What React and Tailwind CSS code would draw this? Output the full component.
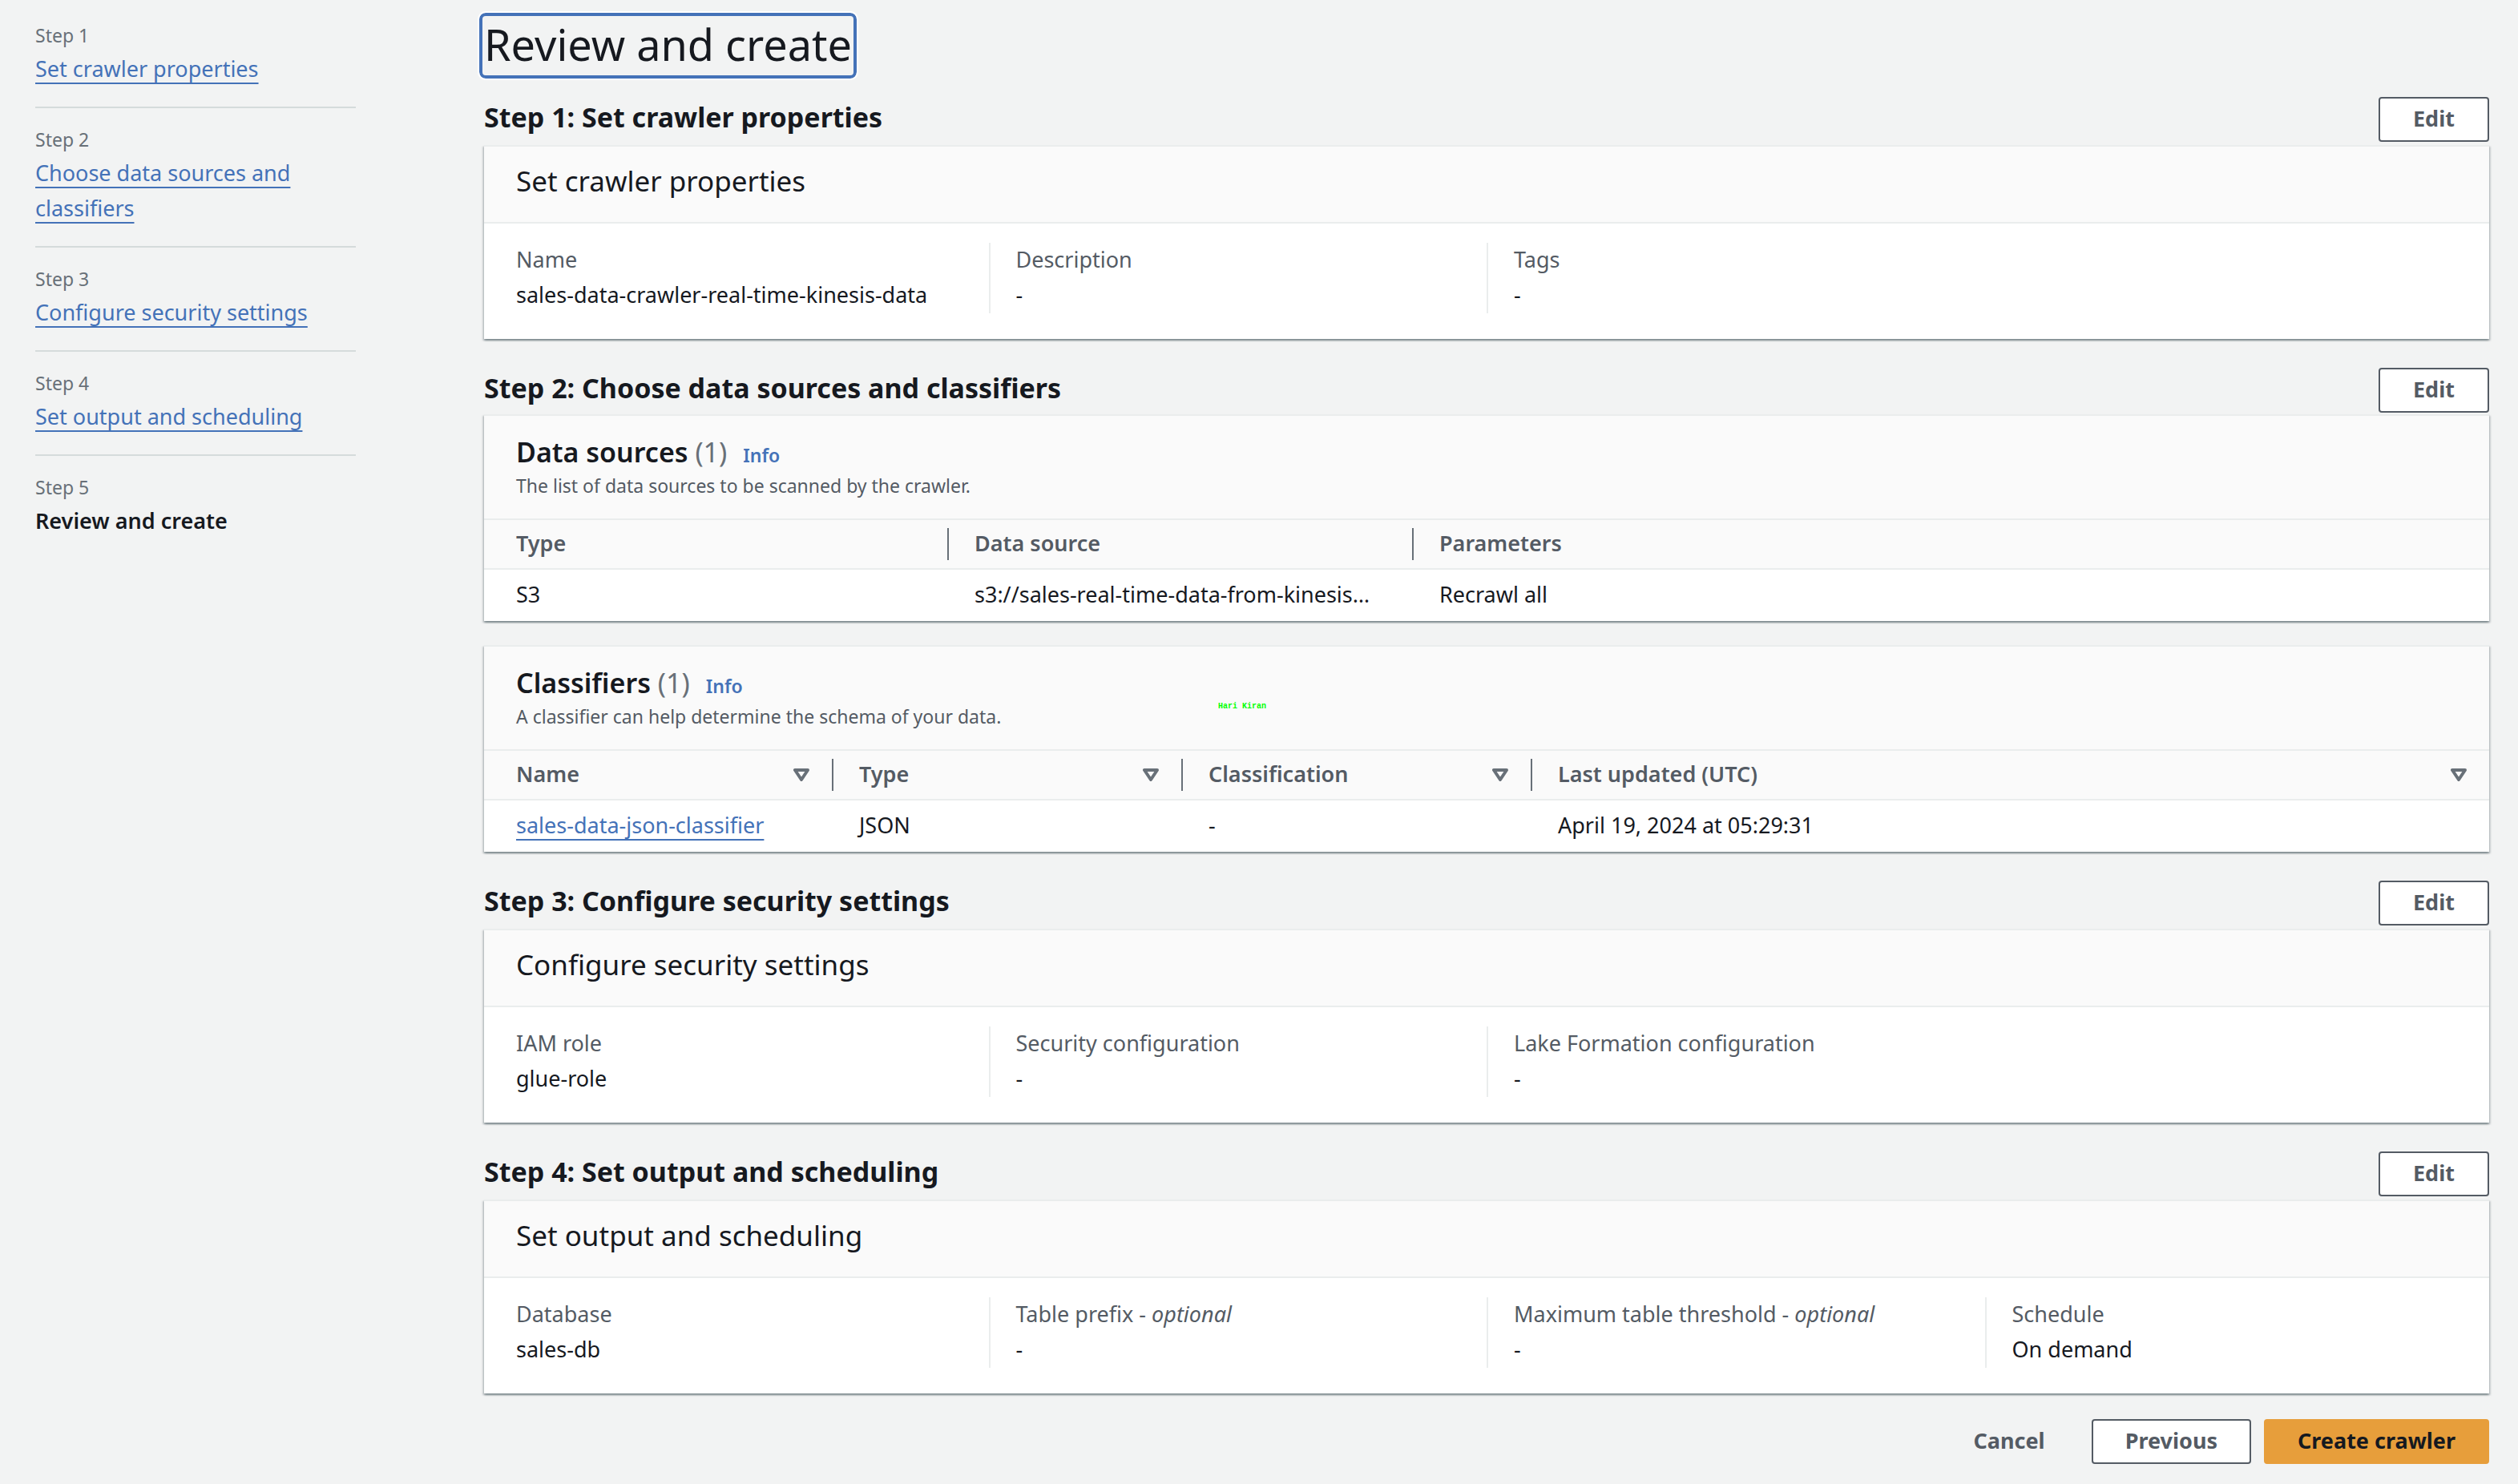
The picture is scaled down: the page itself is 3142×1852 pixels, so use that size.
const steps = [
  "Set crawler properties",
  "Choose data sources and classifiers",
  "Configure security settings",
  "Set output and scheduling",
];

const linkStyle =
  "text-[#4472b8] underline decoration-2 underline-offset-[7px] [text-decoration-skip-ink:none]";

function StepNav() {
  return (
    <nav aria-label="Steps" className="w-[400px] shrink-0 pt-6">
      <ol>
        {steps.map((label, i) => (
          <li key={label} className="mb-[19px] border-b-2 border-[#d5dbdb] pb-[25px]">
            <span className="block text-[23px] leading-[40px] text-[#687078]">Step {i + 1}</span>
            <a href={`#step-${i + 1}`} className={`block leading-[44px] ${linkStyle}`}>
              {label}
            </a>
          </li>
        ))}
        <li aria-current="step">
          <span className="block text-[23px] leading-[40px] text-[#687078]">Step 5</span>
          <span className="block font-semibold leading-[44px]">Review and create</span>
        </li>
      </ol>
    </nav>
  );
}

function Button({ variant = "normal", children, ...rest }) {
  const look = {
    normal: "border-[#545b64] bg-white text-[#545b64]",
    link: "border-transparent text-[#545b64]",
    primary: "border-[#e79e3b] bg-[#e79e3b] text-[#16191f]",
  }[variant];
  return (
    <button
      type="button"
      className={`h-14 min-w-[138px] whitespace-nowrap rounded border-2 px-10 pb-0.5 font-bold leading-[50px] ${look}`}
      {...rest}
    >
      {children}
    </button>
  );
}

function StepSection({ number, title, headerGap = "mb-1", children }) {
  return (
    <section id={`step-${number}`}>
      <div className={`flex items-start justify-between gap-4 ${headerGap}`}>
        <h2 className="text-[34px] font-bold leading-[50px]">
          Step {number}: {title}
        </h2>
        <Button aria-label={`Edit step ${number}`}>Edit</Button>
      </div>
      {children}
    </section>
  );
}

function Card({ children }) {
  return (
    <div className="relative border-t-2 border-[#eaeded] bg-white shadow-[0_2px_2px_0_rgba(0,28,36,0.3),2px_2px_2px_0_rgba(0,28,36,0.15),-2px_2px_2px_0_rgba(0,28,36,0.15)]">
      {children}
    </div>
  );
}

function DetailCard({ title, items }) {
  return (
    <Card>
      <h3 className="border-b-2 border-[#eaeded] bg-[#fafafa] px-10 pb-[29px] pt-[21px] text-[35px] leading-[44px]">
        {title}
      </h3>
      <dl className="mx-2 grid grid-cols-4 pb-8 pt-6">
        {items.map(({ label, value, optional }) => (
          <div
            key={label}
            className="border-l-2 border-[#eaeded] pl-8 first:border-l-0"
          >
            <dt className="leading-[42px] text-[#545b64]">
              {label}
              {optional && (
                <>
                  {" - "}
                  <i>optional</i>
                </>
              )}
            </dt>
            <dd className="leading-[46px]">{value}</dd>
          </div>
        ))}
      </dl>
    </Card>
  );
}

function SortIcon() {
  return (
    <svg width="20" height="16" viewBox="0 0 20 16" fill="none" aria-hidden="true">
      <path d="M2 2h16l-8 12z" stroke="#687078" strokeWidth="4" strokeLinejoin="round" />
    </svg>
  );
}

function TableCard({ title, description, columns, row, colWidth, sortable, children }) {
  return (
    <Card>
      <div className="border-b-2 border-[#eaeded] bg-[#fafafa] px-10 pb-[21px] pt-[23px]">
        <div className="flex h-11 items-baseline leading-[44px]">
          <h3 className="text-[34px] font-semibold">
            {title} <span className="font-normal text-[#687078]">(1)</span>
          </h3>
          <a href="#info" className="ml-5 text-[23px] font-semibold text-[#4472b8]">
            Info
          </a>
        </div>
        <p className="text-[23px] leading-[40px] text-[#545b64]">{description}</p>
      </div>
      <table className="w-full table-fixed text-left" aria-label={title}>
        <colgroup>
          {columns.map((name, i) => (
            <col key={name} className={i < columns.length - 1 ? colWidth : ""} />
          ))}
        </colgroup>
        <thead>
          <tr className="border-b-2 border-[#eaeded] bg-[#fafafa] text-[#545b64]">
            {columns.map((name, i) => (
              <th key={name} scope="col" className="py-[10px] font-semibold">
                <div
                  className={`flex h-10 items-center justify-between pr-7 leading-[38px] ${
                    i === 0 ? "pl-10" : "pl-8"
                  } ${i < columns.length - 1 ? "border-r-2 border-[#687078]" : ""}`}
                >
                  <span className="h-10">{name}</span>
                  {sortable && (
                    <button type="button" aria-label={`Sort by ${name}`}>
                      <SortIcon />
                    </button>
                  )}
                </div>
              </th>
            ))}
          </tr>
        </thead>
        <tbody>
          <tr>
            {row.map((cell, i) => (
              <td
                key={i}
                className={`whitespace-nowrap pb-0.5 leading-[62px] ${i === 0 ? "pl-10" : "pl-8"}`}
              >
                {cell}
              </td>
            ))}
          </tr>
        </tbody>
      </table>
      {children}
    </Card>
  );
}

export default function App() {
  return (
    <div className="flex min-h-screen gap-40 bg-[#f2f3f3] pl-11 pr-9 font-['Noto_Sans','Open_Sans',sans-serif] text-[27px] text-[#16191f]">
      <StepNav />
      <main className="min-w-0 grow pb-6 pt-4">
        <h1
          tabIndex={-1}
          className="-ml-1.5 mb-[23px] w-fit rounded-lg border-4 border-[#4472b8] px-0.5 pb-1 text-[54px] leading-[70px] outline-2 outline-white"
        >
          Review and create
        </h1>
        <div className="flex flex-col gap-9">
          <StepSection number={1} title="Set crawler properties">
            <DetailCard
              title="Set crawler properties"
              items={[
                { label: "Name", value: "sales-data-crawler-real-time-kinesis-data" },
                { label: "Description", value: "-" },
                { label: "Tags", value: "-" },
              ]}
            />
          </StepSection>

          <StepSection
            number={2}
            title="Choose data sources and classifiers"
            headerGap="mb-0.5"
          >
            <div className="flex flex-col gap-[30px]">
              <TableCard
                title="Data sources"
                description="The list of data sources to be scanned by the crawler."
                columns={["Type", "Data source", "Parameters"]}
                row={["S3", "s3://sales-real-time-data-from-kinesis…", "Recrawl all"]}
                colWidth="w-[580px]"
              />
              <TableCard
                title="Classifiers"
                description="A classifier can help determine the schema of your data."
                columns={["Name", "Type", "Classification", "Last updated (UTC)"]}
                row={[
                  <a href="#classifier" className={linkStyle}>
                    sales-data-json-classifier
                  </a>,
                  "JSON",
                  "-",
                  "April 19, 2024 at 05:29:31",
                ]}
                colWidth="w-[436px]"
                sortable
              >
                <span className="absolute left-[916px] top-[69px] font-['Liberation_Mono',monospace] text-[10px] font-bold leading-3 text-[#00ff00]">
                  Hari Kiran
                </span>
              </TableCard>
            </div>
          </StepSection>

          <StepSection number={3} title="Configure security settings">
            <DetailCard
              title="Configure security settings"
              items={[
                { label: "IAM role", value: "glue-role" },
                { label: "Security configuration", value: "-" },
                { label: "Lake Formation configuration", value: "-" },
              ]}
            />
          </StepSection>

          <StepSection number={4} title="Set output and scheduling">
            <DetailCard
              title="Set output and scheduling"
              items={[
                { label: "Database", value: "sales-db" },
                { label: "Table prefix", value: "-", optional: true },
                { label: "Maximum table threshold", value: "-", optional: true },
                { label: "Schedule", value: "On demand" },
              ]}
            />
          </StepSection>
        </div>

        <div className="mt-8 flex justify-end gap-4">
          <Button variant="link">Cancel</Button>
          <Button>Previous</Button>
          <Button variant="primary">Create crawler</Button>
        </div>
      </main>
    </div>
  );
}
